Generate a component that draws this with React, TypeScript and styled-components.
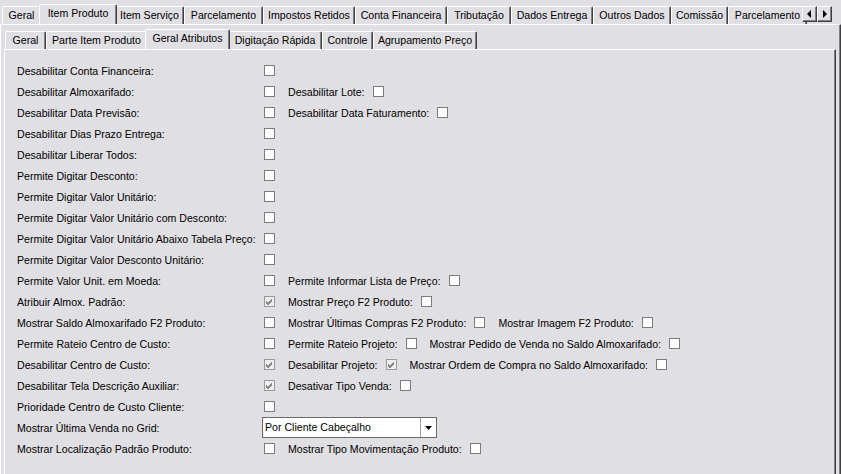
import React from 'react';
import styled, { createGlobalStyle } from 'styled-components';

const Global = createGlobalStyle`
  html, body { margin: 0; padding: 0; background: #e0dfe3; }
  body { font-family: "Liberation Sans", Arial, sans-serif; font-size: 10.6px; color: #000; }
`;

const Screen = styled.div`
  width: 841px;
  height: 474px;
  overflow: hidden;
  display: flex;
  flex-direction: column;
  background: #e0dfe3;
`;

const TabStrip = styled.div<{ $h: number; $pl: number }>`
  position: relative;
  display: flex;
  align-items: flex-end;
  flex-shrink: 0;
  height: ${p => p.$h}px;
  padding-left: ${p => p.$pl}px;
  overflow: hidden;
`;

const Tab = styled.div<{ $active?: boolean; $w: number }>`
  position: relative;
  flex-shrink: 0;
  box-sizing: border-box;
  width: ${p => p.$w + (p.$active ? 4 : 0)}px;
  height: ${p => (p.$active ? 21 : 18)}px;
  padding-top: 1px;
  margin: 0 ${p => (p.$active ? -2 : 0)}px ${p => (p.$active ? -1 : 0)}px;
  z-index: ${p => (p.$active ? 2 : 1)};
  background: #e0dfe3;
  border-left: 1px solid #fff;
  border-top: 1px solid #fff;
  border-right: 1px solid #404040;
  box-shadow: inset -1px 0 #808080;
  border-radius: 2px 2px 0 0;
  line-height: 15px;
  text-align: center;
  white-space: nowrap;
  overflow: hidden;
`;

const Scroller = styled.div`
  position: absolute;
  right: 9px;
  top: 6px;
  display: flex;
  z-index: 3;
`;

const ScrollBtn = styled.div`
  box-sizing: border-box;
  width: 15px;
  height: 16px;
  background: #e0dfe3;
  border-top: 1px solid #fff;
  border-left: 1px solid #fff;
  border-right: 1px solid #404040;
  border-bottom: 1px solid #404040;
  box-shadow: inset -1px -1px #808080;
  display: flex;
  align-items: center;
  justify-content: center;
`;

const Page = styled.div<{ $pad: string }>`
  position: relative;
  flex: 1;
  display: flex;
  flex-direction: column;
  min-height: 0;
  padding: ${p => p.$pad};
  border-top: 1px solid #fff;
  border-left: 1px solid #fff;
  border-right: 1px solid #404040;
  box-shadow: inset -1px 0 #808080;
`;

const Form = styled.div`
  display: flex;
  flex-direction: column;
  padding: 10px 0 0 12px;
`;

const Row = styled.div`
  display: flex;
  align-items: center;
  height: 21px;
  white-space: nowrap;
`;

const MainLabel = styled.span`
  width: 247px;
  flex-shrink: 0;
`;

const SubLabel = styled.span`
  margin: 0 8px 0 13px;
`;

const Box = styled.span<{ $checked?: boolean }>`
  box-sizing: border-box;
  width: 11px;
  height: 11px;
  flex-shrink: 0;
  border: 1px solid ${p => (p.$checked ? '#9a9a9a' : '#7c7c7c')};
  background: ${p => (p.$checked ? '#eeeeee' : '#ffffff')};
  display: flex;
  align-items: center;
  justify-content: center;
`;

const Combo = styled.div`
  box-sizing: border-box;
  margin-left: -2px;
  width: 175px;
  height: 21px;
  display: flex;
  background: #fff;
  border: 1px solid #6a6a6a;
`;

const ComboText = styled.span`
  flex: 1;
  padding-left: 2px;
  line-height: 19px;
`;

const ComboBtn = styled.div`
  width: 15px;
  border-left: 1px solid #a0a0a0;
  display: flex;
  align-items: center;
  justify-content: center;
`;

type Item = { label: string; checked?: boolean };
type RowDef = { main: Item; extra?: Item[]; combo?: string };

const rows: RowDef[] = [
  { main: { label: 'Desabilitar Conta Financeira:' } },
  { main: { label: 'Desabilitar Almoxarifado:' }, extra: [{ label: 'Desabilitar Lote:' }] },
  { main: { label: 'Desabilitar Data Previsão:' }, extra: [{ label: 'Desabilitar Data Faturamento:' }] },
  { main: { label: 'Desabilitar Dias Prazo Entrega:' } },
  { main: { label: 'Desabilitar Liberar Todos:' } },
  { main: { label: 'Permite Digitar Desconto:' } },
  { main: { label: 'Permite Digitar Valor Unitário:' } },
  { main: { label: 'Permite Digitar Valor Unitário com Desconto:' } },
  { main: { label: 'Permite Digitar Valor Unitário Abaixo Tabela Preço:' } },
  { main: { label: 'Permite Digitar Valor Desconto Unitário:' } },
  { main: { label: 'Permite Valor Unit. em Moeda:' }, extra: [{ label: 'Permite Informar Lista de Preço:' }] },
  { main: { label: 'Atribuir Almox. Padrão:', checked: true }, extra: [{ label: 'Mostrar Preço F2 Produto:' }] },
  {
    main: { label: 'Mostrar Saldo Almoxarifado F2 Produto:' },
    extra: [{ label: 'Mostrar Últimas Compras F2 Produto:' }, { label: 'Mostrar Imagem F2 Produto:' }],
  },
  {
    main: { label: 'Permite Rateio Centro de Custo:' },
    extra: [{ label: 'Permite Rateio Projeto:' }, { label: 'Mostrar Pedido de Venda no Saldo Almoxarifado:' }],
  },
  {
    main: { label: 'Desabilitar Centro de Custo:', checked: true },
    extra: [{ label: 'Desabilitar Projeto:', checked: true }, { label: 'Mostrar Ordem de Compra no Saldo Almoxarifado:' }],
  },
  { main: { label: 'Desabilitar Tela Descrição Auxiliar:', checked: true }, extra: [{ label: 'Desativar Tipo Venda:' }] },
  { main: { label: 'Prioridade Centro de Custo Cliente:' } },
  { main: { label: 'Mostrar Última Venda no Grid:' }, combo: 'Por Cliente Cabeçalho' },
  { main: { label: 'Mostrar Localização Padrão Produto:' }, extra: [{ label: 'Mostrar Tipo Movimentação Produto:' }] },
];

const outerTabs: [string, number][] = [
  ['Geral', 39], ['Item Produto', 74], ['Item Serviço', 69], ['Parcelamento', 79], ['Impostos Retidos', 92],
  ['Conta Financeira', 92], ['Tributação', 64], ['Dados Entrega', 82], ['Outros Dados', 78], ['Comissão', 57],
  ['Parcelamento', 79],
];
const innerTabs: [string, number][] = [
  ['Geral', 41], ['Parte Item Produto', 101], ['Geral Atributos', 81], ['Digitação Rápida', 94],
  ['Controle', 51], ['Agrupamento Preço', 104],
];

const Check = ({ checked }: { checked?: boolean }) => (
  <Box $checked={checked}>
    {checked && (
      <svg width="9" height="9" viewBox="0 0 9 9">
        <path d="M1 4 L3 6 L7 2 M1 5 L3 7 L7 3 M1 6 L3 8 L7 4" stroke="#8a8a8a" strokeWidth="1" fill="none" shapeRendering="crispEdges" />
      </svg>
    )}
  </Box>
);

export default function App() {
  return (
    <Screen>
      <Global />
      <TabStrip $h={24} $pl={2}>
        {outerTabs.map(([t, w], i) => (
          <Tab key={i} $w={w} $active={i === 1}>{t}</Tab>
        ))}
        <Scroller>
          <ScrollBtn>
            <svg width="5" height="8" viewBox="0 0 5 8"><path d="M4 0 L0 4 L4 8 Z" fill="#000" /></svg>
          </ScrollBtn>
          <ScrollBtn>
            <svg width="5" height="8" viewBox="0 0 5 8"><path d="M1 0 L5 4 L1 8 Z" fill="#000" /></svg>
          </ScrollBtn>
        </Scroller>
      </TabStrip>
      <Page $pad="4px 4px 0 3px">
        <TabStrip $h={20} $pl={1}>
          {innerTabs.map(([t, w], i) => (
            <Tab key={i} $w={w} $active={i === 2}>{t}</Tab>
          ))}
        </TabStrip>
        <Page $pad="0">
          <Form>
            {rows.map((r, i) => (
              <Row key={i}>
                <MainLabel>{r.main.label}</MainLabel>
                {r.combo ? (
                  <Combo>
                    <ComboText>{r.combo}</ComboText>
                    <ComboBtn>
                      <svg width="7" height="4" viewBox="0 0 7 4"><path d="M0 0 H7 L3.5 4 Z" fill="#000" /></svg>
                    </ComboBtn>
                  </Combo>
                ) : (
                  <Check checked={r.main.checked} />
                )}
                {r.extra?.map((e, j) => (
                  <React.Fragment key={j}>
                    <SubLabel>{e.label}</SubLabel>
                    <Check checked={e.checked} />
                  </React.Fragment>
                ))}
              </Row>
            ))}
          </Form>
        </Page>
      </Page>
    </Screen>
  );
}
